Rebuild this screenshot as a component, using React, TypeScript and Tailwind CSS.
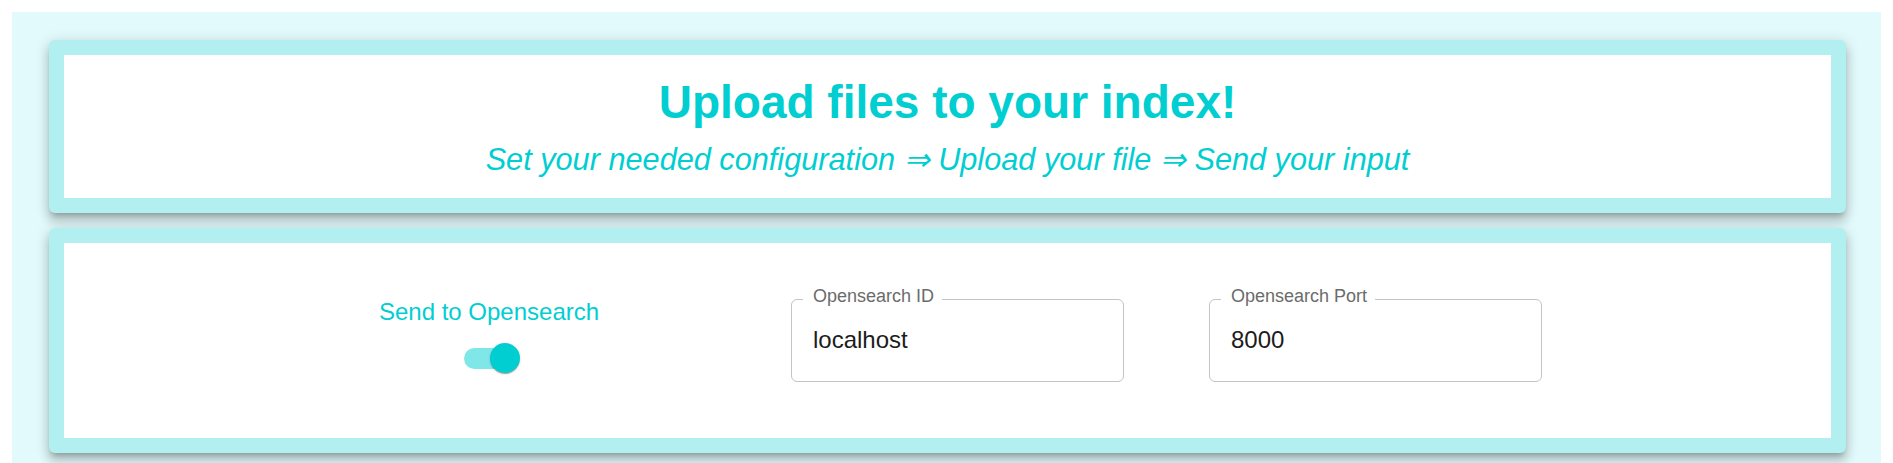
import React from 'react';

const font = { fontFamily: '"Liberation Sans", Arial, sans-serif' };

const paperShadow =
  'shadow-[0px_5px_5px_-3px_rgba(0,0,0,0.2),0px_8px_10px_1px_rgba(0,0,0,0.14),0px_3px_14px_2px_rgba(0,0,0,0.12)]';

const OutlinedField = ({ label, value }: { label: string; value: string }) => {
  return (
    <div className="relative w-[333px] h-[83px] border border-[#c4c4c4] rounded-[6px] bg-white">
      <span className="absolute left-[11px] top-[-13px] pl-[10px] pr-[8px] bg-white text-[18px] leading-[18px] text-[#6b6b6b] whitespace-nowrap">
        {label}
      </span>
      <input
        readOnly
        defaultValue={value}
        className="w-full pl-[21px] pr-[21px] pt-[22px] text-[24px] leading-[36px] text-[#1c1c1c] bg-transparent outline-none"
        style={font}
      />
    </div>
  );
};

const Toggle = () => {
  return (
    <div className="relative w-[51px] h-[21px] rounded-full bg-[#80e7e8]">
      <span className="absolute left-[26px] top-[-5px] w-[30px] h-[30px] rounded-full bg-[#00ced1] shadow-[0px_2px_1px_-1px_rgba(0,0,0,0.2),0px_1px_1px_0px_rgba(0,0,0,0.14),0px_1px_3px_0px_rgba(0,0,0,0.12)]" />
    </div>
  );
};

export default function App() {
  return (
    <div className="min-h-[463px] bg-white pt-[12px] px-[12px]" style={font}>
      <div className="bg-[#e2fafb] pt-[28px] pl-[37px] pr-[35px] pb-[20px] flex flex-col gap-[15px]">
        {/* header card */}
        <section className={`bg-[#b2eff0] rounded-[6px] p-[15px] ${paperShadow}`}>
          <div className="bg-white h-[143px] pt-[19px] flex flex-col items-center">
            <h1 className="text-[46px] leading-[56px] font-bold text-[#00ced1]">
              Upload files to your index!
            </h1>
            <p className="mt-[10px] text-[30.7px] leading-[40px] italic text-[#00ced1] whitespace-nowrap">
              Set your needed configuration ⇒ Upload your file ⇒ Send your input
            </p>
          </div>
        </section>

        {/* config card */}
        <section className={`bg-[#b2eff0] rounded-[6px] p-[15px] ${paperShadow}`}>
          <div className="bg-white h-[195px] flex items-start pl-[314px]">
            <div className="mt-[51px] w-[222px] flex flex-col items-center">
              <span className="text-[24px] leading-[36px] text-[#00ced1] whitespace-nowrap">
                Send to Opensearch
              </span>
              <div className="mt-[18px]">
                <Toggle />
              </div>
            </div>
            <div className="mt-[56px] ml-[191px]">
              <OutlinedField label="Opensearch ID" value="localhost" />
            </div>
            <div className="mt-[56px] ml-[85px]">
              <OutlinedField label="Opensearch Port" value="8000" />
            </div>
          </div>
        </section>
      </div>
    </div>
  );
}
